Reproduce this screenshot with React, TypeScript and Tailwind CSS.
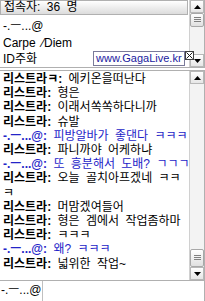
import React from "react";

type Line = { name: string; text: string; me?: boolean };

const lines: Line[] = [
  { name: "리스트라ㅋ:", text: "에키온을떠난다" },
  { name: "리스트라:", text: "형은" },
  { name: "리스트라:", text: "이래서쏙쏙하다니까" },
  { name: "리스트라:", text: "슈발" },
  { name: "-.ㅡ...@:", text: "피방알바가 좋댄다 ㅋㅋㅋ", me: true },
  { name: "리스트라:", text: "파니까야 어케하냐" },
  { name: "-.ㅡ...@:", text: "또 흥분해서 도배? ㄱㄱㄱ", me: true },
  { name: "리스트라:", text: "오늘 골치아프겠네 ㅋㅋ" },
  { name: "", text: "ㅋ" },
  { name: "리스트라:", text: "머맘겠여들어" },
  { name: "리스트라:", text: "형은 겜에서 작업좀하마" },
  { name: "리스트라:", text: "ㅋㅋㅋ" },
  { name: "-.ㅡ...@:", text: "왜? ㅋㅋㅋ", me: true },
  { name: "리스트라:", text: "넓위한 작업~" },
];

function Arrow({ up }: { up?: boolean }) {
  return (
    <div className="h-[13px] w-[14px] flex items-center justify-center border border-[#b8b8b8] bg-gradient-to-b from-white to-[#e6e6e6]">
      <svg width="7" height="4" viewBox="0 0 7 4">
        {up ? <path d="M0 4 L3.5 0 L7 4 Z" fill="#000" /> : <path d="M0 0 L3.5 4 L7 0 Z" fill="#000" />}
      </svg>
    </div>
  );
}

function Thumb({ h }: { h: string }) {
  return (
    <div className={`${h} w-[14px] flex items-center justify-center border border-[#a8a8a8] rounded-[2px] bg-gradient-to-b from-white to-[#e0e0e0]`}>
      <svg width="7" height="6" viewBox="0 0 7 6">
        <path d="M0 0.5 H7 M0 2.5 H7 M0 4.5 H7" stroke="#808080" strokeWidth="1" />
      </svg>
    </div>
  );
}

export default function App() {
  const font = "font-['Liberation_Sans','Noto_Sans_CJK_KR',sans-serif]";
  return (
    <div className={`w-[205px] h-[301px] bg-white overflow-hidden ${font} text-[12px] leading-[15px] text-black [word-spacing:3px]`}>
      {/* user list */}
      <div className="relative flex h-[68px] border-r border-[#b0b0b0] border-b">
        <div className="flex-1 flex flex-col">
          <div className="h-[15px] mr-[1px] border border-[#b0b0b0] bg-gradient-to-b from-white to-[#dcdcdc] pl-[3px] text-[12px] leading-[13px]">
            접속자: 36 명
          </div>
          <div className="pl-[3px] pt-[3px] flex flex-col leading-[16.5px]">
            <span>-.ㅡ...@</span>
            <span>Carpe ⁄Diem</span>
            <span>ID주화</span>
          </div>
        </div>
        <div className="w-[15px] flex flex-col bg-[#f3f3f3] border-l border-[#d0d0d0]">
          <Arrow up />
          <Thumb h="h-[14px]" />
          <div className="flex-1" />
          <Arrow />
        </div>
        {/* ad */}
        <div className="absolute left-[93px] top-[51px] flex items-start [word-spacing:0px]">
          <div className="h-[15px] px-[2px] border border-[#7a7a9a] bg-white text-[#1a1aa0] text-[11px] leading-[13px]">
            www.GagaLive.kr
          </div>
          <div className="w-[9px] h-[9px] border border-[#404040] bg-white flex items-center justify-center">
            <svg width="7" height="7" viewBox="0 0 7 7">
              <path d="M0.5 0.5 L6.5 6.5 M6.5 0.5 L0.5 6.5" stroke="#202020" strokeWidth="1" />
            </svg>
          </div>
        </div>
      </div>

      {/* chat */}
      <div className="mt-[2px] flex h-[211px] border-t border-b border-r border-[#b0b0b0]">
        <div className="flex-1 pl-[3px] pt-[1px] flex flex-col leading-[14.2px] whitespace-nowrap overflow-hidden">
          {lines.map((l, i) => (
            <div key={i} className={l.me ? "text-[#2424c8]" : ""}>
              {l.name && <span className="font-bold">{l.name} </span>}
              <span>{l.text}</span>
            </div>
          ))}
        </div>
        <div className="w-[15px] flex flex-col bg-[#f3f3f3] border-l border-[#d0d0d0]">
          <Arrow up />
          <div className="flex-1" />
          <Thumb h="h-[18px]" />
          <Arrow />
        </div>
      </div>

      {/* input */}
      <div className="flex h-[20px] border-r border-[#b0b0b0]">
        <div className="w-[43px] border-r border-[#c0c0c0] pl-[1px] leading-[18px]">-.ㅡ...@</div>
        <div className="flex-1" />
      </div>
    </div>
  );
}
